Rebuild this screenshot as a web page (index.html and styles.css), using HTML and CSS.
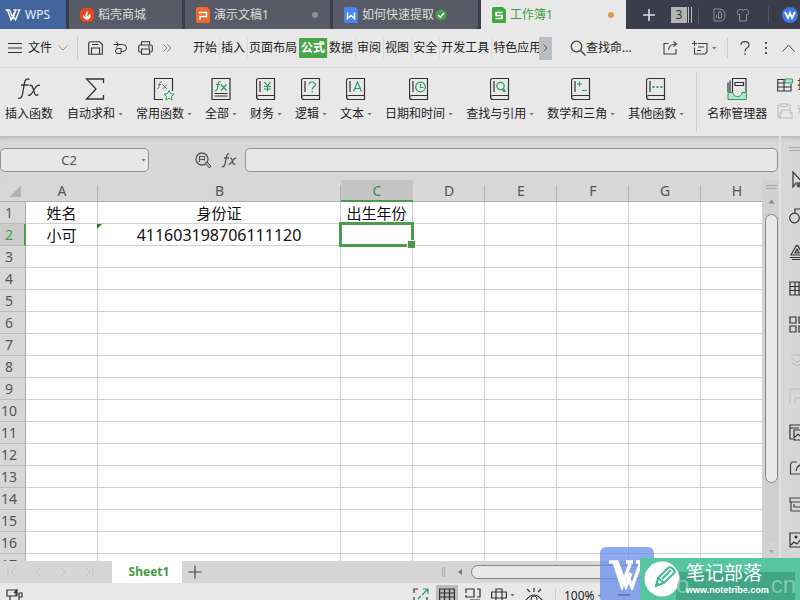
FILE: index.html
```html
<!DOCTYPE html>
<html lang="zh-CN">
<head>
<meta charset="utf-8">
<title>工作簿1 - WPS</title>
<link rel="stylesheet" href="styles.css">
</head>
<body>
<svg class="defs" aria-hidden="true">
  <defs>
    <symbol id="book" viewBox="0 0 20 24">
      <path d="M3 1.500H18.500V22.500H3Q.5 22.500 .5 19.500V3.500Q.5 1.500 3 1.500ZM.5 20Q1 18.500 3 18.500H18.500M4 4V15" fill="none" stroke="#333" stroke-width="1.200"/>
    </symbol>
  </defs>
</svg>

<header class="titlebar">
  <button class="wtab wps"><svg width="16" height="12" viewBox="0 0 16 12"><path d="M.5 1H4.500L8 9.500L11 1H8.500M2.500 1L6 11L9.500 3M15.500 1H12.500M14.500 1L10.500 11L8 5" fill="none" stroke="#fff" stroke-width="1.300"/></svg>WPS</button>
  <button class="wtab shop"><svg width="14" height="14" viewBox="0 0 14 14"><rect width="14" height="14" rx="5" fill="#e8461e"/><path d="M7 2.500Q8.500 5 7 8Q9.500 7.500 9.500 5.500Q12 8.500 9 11Q7 12 5 11Q2 9 3.500 6.500Q4.500 9 5.500 9Q5 6 7 2.500Z" fill="#fff"/></svg>稻壳商城</button>
  <button class="wtab slides"><svg width="14" height="16" viewBox="0 0 14 16"><path d="M0 1.500Q0 0 1.500 0H11L14 3V14.500Q14 16 12.500 16H1.500Q0 16 0 14.500Z" fill="#ea6a35"/><path d="M4 13V9.500H10.500V5.500H3" fill="none" stroke="#fff" stroke-width="1.500"/></svg>演示文稿1<i class="dot"></i></button>
  <button class="wtab doc"><svg width="14" height="16" viewBox="0 0 14 16"><path d="M0 1.500Q0 0 1.500 0H11L14 3V14.500Q14 16 12.500 16H1.500Q0 16 0 14.500Z" fill="#4a86e8"/><path d="M3.500 5.500V11.500L7 8.500L10.500 11.500V5.500" fill="none" stroke="#fff" stroke-width="1.500"/></svg><span>如何快速提取</span><svg width="12" height="12" viewBox="0 0 12 12"><circle cx="6" cy="6" r="5.500" fill="#43a047"/><path d="M3 6L5.300 8.200L9 4" fill="none" stroke="#fff" stroke-width="1.300"/></svg></button>
  <button class="wtab sheet active"><svg width="14" height="16" viewBox="0 0 14 16"><path d="M0 1.500Q0 0 1.500 0H11L14 3V14.500Q14 16 12.500 16H1.500Q0 16 0 14.500Z" fill="#41a845"/><path d="M10.500 5.500H4V8.500H10V11.500H3.500" fill="none" stroke="#fff" stroke-width="1.500"/></svg>工作簿1<i class="dot orange"></i></button>
  <div class="window-tools">
    <button aria-label="新建"><svg width="14" height="14" viewBox="0 0 14 14"><path d="M7 1V13M1 7H13" stroke="#ddd" stroke-width="1.600"/></svg></button>
    <button class="count">3</button>
    <span class="vline"></span>
    <button aria-label="文档"><svg width="13" height="14" viewBox="0 0 13 14"><path d="M1 1H7Q12 2 12 7Q12 13 7 13H1ZM3.500 10V7M5.500 11V5L7 3L8.500 5V10H5.500" fill="none" stroke="#8d9099"/></svg></button>
    <button aria-label="皮肤"><svg width="14" height="14" viewBox="0 0 14 14"><path d="M4 1Q7 4 10 1L13 3.500L12 6.500H10.500V13H3.500V6.500H2L1 3.500Z" fill="none" stroke="#8d9099"/></svg></button>
    <span class="vline far"></span>
    <button class="avatar" aria-label="账号"><svg width="16" height="16" viewBox="0 0 16 16"><circle cx="8" cy="8" r="8" fill="#3f78e0"/><path d="M3 5L6 11L8 6L10 11L13 5" fill="none" stroke="#fff" stroke-width="1.800"/></svg></button>
  </div>
</header>

<nav class="menubar">
  <button class="file"><svg width="14" height="12" viewBox="0 0 14 12"><path d="M0 1.500H14M0 6H14M0 10.500H14" stroke="#333" stroke-width="1.200"/></svg>文件<svg width="10" height="6" viewBox="0 0 10 6"><path d="M.5 .5L5 5L9.500 .5" fill="none" stroke="#999"/></svg></button>
  <div class="quick">
    <button aria-label="保存"><svg width="15" height="14" viewBox="0 0 15 14"><path d="M2.500 .7H11.500L14.300 3.500V13.300H.7V2.500Q.7 .7 2.500 .7ZM3.500 13V7H11.500V13M4 3.500H10.500" fill="none" stroke="#333" stroke-width="1.100"/></svg></button>
    <button aria-label="撤消"><svg width="15" height="14" viewBox="0 0 15 14"><path d="M.5 3.500H9.500Q13.500 3.500 13.500 7T9.500 10.500H8M3 .5L5.500 3.500L3 6.500M8 7V12.500H5Q2.500 12.500 2.500 10T5 7.500H8" fill="none" stroke="#333"/></svg></button>
    <button aria-label="打印"><svg width="15" height="14" viewBox="0 0 15 14"><path d="M3.500 4V.7H11.500V4M3.500 11H2Q.7 11 .7 9.500V5.500Q.7 4 2 4H13Q14.300 4 14.300 5.500V9.500Q14.300 11 13 11H11.500M3.500 8H11.500V13.300H3.500ZM10 6H12" fill="none" stroke="#333" stroke-width="1.100"/></svg></button>
    <button aria-label="更多"><svg width="9" height="8" viewBox="0 0 9 8"><path d="M.5 .5L4 4L.5 7.500M4.500 .5L8 4L4.500 7.500" fill="none" stroke="#888"/></svg></button>
  </div>
  <div class="tabs">
    <button>开始</button><button>插入</button><button>页面布局</button><button class="on">公式</button><button>数据</button><button>审阅</button><button>视图</button><button>安全</button><button>开发工具</button><button>特色应用</button>
  </div>
  <button class="scroll" aria-label="向右滚动"><svg width="5" height="8" viewBox="0 0 5 8"><path d="M.5 .5L4 4L.5 7.500" fill="none" stroke="#666"/></svg></button>
  <button class="find"><svg width="16" height="16" viewBox="0 0 16 16"><circle cx="6.500" cy="6.500" r="5.300" fill="none" stroke="#444" stroke-width="1.300"/><path d="M10.500 10.500L15.500 15.500" stroke="#444" stroke-width="1.500"/></svg>查找命...</button>
  <div class="menu-right">
    <button aria-label="分享"><svg width="15" height="14" viewBox="0 0 15 14"><path d="M5.500 2.500H1V13H13V8M5.500 9Q6 3 13 3M10.500 .5L13.500 3L10.500 5.500" fill="none" stroke="#444" stroke-width="1.100"/></svg></button>
    <button aria-label="批注"><svg width="16" height="14" viewBox="0 0 16 14"><path d="M6 2.500H15V11L13 13H2.500V6.500M0 2.500H5M2.500 0V5M6 6H12M5 9.500H9" fill="none" stroke="#444" stroke-width="1.100"/></svg><i class="caret"></i></button>
    <span class="sep"></span>
    <button aria-label="帮助"><svg width="10" height="14" viewBox="0 0 10 14"><path d="M1 4Q1 .7 5 .7T9 4Q9 6 7 7Q5 8 5 10.500M5 12.300V14" fill="none" stroke="#444" stroke-width="1.200"/></svg></button>
    <button aria-label="选项"><svg width="4" height="14" viewBox="0 0 4 14"><path d="M1 1H3V3H1ZM1 6H3V8H1ZM1 11H3V13H1Z" fill="#555"/></svg></button>
    <button aria-label="折叠"><svg width="13" height="8" viewBox="0 0 13 8"><path d="M.5 7.500L6.500 1L12.500 7.500" fill="none" stroke="#444"/></svg></button>
  </div>
</nav>

<section class="ribbon">
  <button><svg width="26" height="24" viewBox="0 0 26 24"><path d="M13.500 2.500Q9.500 .5 8.500 6L6.500 17Q5.500 22.500 2 21M5 8H12.500M13.500 8.500Q16 7.500 17 11L18.500 16Q19.500 19.500 22.500 17.500M24 8.500Q21.500 7 18.500 12L17 14.500Q14 19.500 12 18" fill="none" stroke="#333" stroke-width="1.300"/></svg><span>插入函数</span></button>
  <button><svg width="20" height="24" viewBox="0 0 20 24"><path d="M18.500 6V2H1.500L11 12L1.500 22H18.500V18" fill="none" stroke="#333" stroke-width="1.300"/></svg><span>自动求和<i class="caret"></i></span></button>
  <button><svg width="22" height="24" viewBox="0 0 22 24"><path d="M10 22.500H1.500V1.500H19.500V14" fill="none" stroke="#333" stroke-width="1.200"/><path d="M9 5Q7 4 6.500 7L6 10Q5.500 12 4 11.500M5 7.500H8M9.500 7.500L14 12M14 7.500L9.500 12" fill="none" stroke="#777"/><path d="M16 13.500L17.600 16.700L21 17.200L18.500 19.500L19.100 23L16 21.300L12.900 23L13.500 19.500L11 17.200L14.400 16.700Z" fill="#e8e8e8" stroke="#2a9d5c"/></svg><span>常用函数<i class="caret"></i></span></button>
  <button><svg width="20" height="24" viewBox="0 0 20 24"><path d="M1 1.500H19V22.500H1ZM3.500 16.500H16.500M3.500 19H16.500" fill="none" stroke="#333" stroke-width="1.200"/><path d="M9.500 5Q7.500 4 7 7L6.500 11Q6 14 4 13.500M5 7.500H9M10 7.500L15.500 13.500M15.500 7.500L10 13.500" fill="none" stroke="#2a9d5c" stroke-width="1.200"/></svg><span>全部<i class="caret"></i></span></button>
  <button><svg width="20" height="24" viewBox="0 0 20 24"><use href="#book"/><path d="M8.500 5L11.500 9L14.500 5M11.500 9V14M8 9.500H15M8 12H15" fill="none" stroke="#2a9d5c" stroke-width="1.200"/></svg><span>财务<i class="caret"></i></span></button>
  <button><svg width="20" height="24" viewBox="0 0 20 24"><use href="#book"/><path d="M8 7.500Q8 5 11 5T14.500 7.500Q14.500 9 12.500 10Q11.300 11 11.300 12.500M11.300 14V15.500" fill="none" stroke="#2a9d5c" stroke-width="1.200"/></svg><span>逻辑<i class="caret"></i></span></button>
  <button><svg width="20" height="24" viewBox="0 0 20 24"><use href="#book"/><path d="M7.500 14.500L11.500 5L15.500 14.500M9 11.500H14" fill="none" stroke="#2a9d5c" stroke-width="1.200"/></svg><span>文本<i class="caret"></i></span></button>
  <button><svg width="20" height="24" viewBox="0 0 20 24"><use href="#book"/><circle cx="11.500" cy="10" r="4.800" fill="none" stroke="#2a9d5c" stroke-width="1.200"/><path d="M11.500 7V10.500H14.500" fill="none" stroke="#2a9d5c" stroke-width="1.200"/></svg><span>日期和时间<i class="caret"></i></span></button>
  <button><svg width="20" height="24" viewBox="0 0 20 24"><use href="#book"/><circle cx="10.500" cy="9" r="3.700" fill="none" stroke="#2a9d5c" stroke-width="1.200"/><path d="M12.500 12.500Q13 11 15 13.500Q16 15 13.500 14.500Z" fill="none" stroke="#2a9d5c" stroke-width="1.200"/></svg><span>查找与引用<i class="caret"></i></span></button>
  <button><svg width="20" height="24" viewBox="0 0 20 24"><use href="#book"/><path d="M8.500 4.500V9.500M6 7H11M11 13.500H16" stroke="#2a9d5c" stroke-width="1.200"/></svg><span>数学和三角<i class="caret"></i></span></button>
  <button><svg width="20" height="24" viewBox="0 0 20 24"><use href="#book"/><path d="M6.500 9H8.500V11H6.500ZM10.500 9H12.500V11H10.500ZM14.500 9H16.500V11H14.500Z" fill="#2a9d5c"/></svg><span>其他函数<i class="caret"></i></span></button>
  <span class="sep"></span>
  <button><svg width="20" height="24" viewBox="0 0 20 24"><path d="M1 15.500H6Q6 19.500 10.500 19.500T15 15.500H19.300V22.500H1Z" fill="#b5e6cf" stroke="#2a9d5c"/><path d="M5.500 15V1.500H19V15M3 15V3.500M1 15V5.500M8 5.500H16.500V8.500H8Z" fill="none" stroke="#333" stroke-width="1.200"/></svg><span>名称管理器</span></button>
  <div class="cut">
    <button><svg width="16" height="14" viewBox="0 0 16 14"><path d="M8 1.500H.7V13H14V6M.7 5H8M.7 9H14M7 1.500V13" fill="none" stroke="#333" stroke-width="1.100"/><path d="M8 1H15.400V5H8Z" fill="#b5e6cf" stroke="#2a9d5c"/></svg>指定</button>
    <button class="dim"><svg width="16" height="16" viewBox="0 0 16 16"><path d="M4 2H1V14H4M10 2H13V6M4 .7H10V3.500H4ZM4.500 11V7H13.500V11M4.500 10H3V15H15V10H13.500" fill="none" stroke="#bbb" stroke-width="1.100"/></svg>粘贴</button>
  </div>
</section>

<div class="workspace">
  <main>
    <div class="formula-bar">
      <label class="name-box"><input value="C2" aria-label="名称框"><i class="caret"></i></label>
      <button class="lookup" aria-label="查找"><svg width="17" height="17" viewBox="0 0 17 17"><circle cx="7" cy="7" r="6" fill="none" stroke="#555" stroke-width="1.300"/><path d="M4.500 10V4.500H9.500V8.500M4.500 7.500H9.500" fill="none" stroke="#555" stroke-width="1.100"/><path d="M10.500 10.500L12 10L16 14L14.500 16L10.500 12Z" fill="#aaa" stroke="#555"/></svg></button>
      <button class="fx" aria-label="插入函数"><svg width="16" height="15" viewBox="0 0 16 15"><path d="M8.500 1.200Q6 0 5.500 4L4 11Q3 14.500 .7 13.500M3 5H8M9 5.300Q10.500 4.500 11.300 7.500L12 10Q12.500 12 14.500 11M15.300 5.300Q13.500 4.500 11.500 8T7.500 11.300" fill="none" stroke="#555" stroke-width="1.300"/></svg></button>
      <input class="formula" aria-label="编辑栏">
    </div>
    <div class="grid-area">
      <div class="grid">
        <table>
          <colgroup><col class="c-head"><col class="c"><col class="c-wide"><col class="c"><col class="c"><col class="c"><col class="c"><col class="c"><col class="c"></colgroup>
          <thead><tr><th class="corner"></th><th>A</th><th>B</th><th class="sel">C</th><th>D</th><th>E</th><th>F</th><th>G</th><th>H</th></tr></thead>
          <tbody>
            <tr><th>1</th><td>姓名</td><td>身份证</td><td>出生年份</td><td></td><td></td><td></td><td></td><td></td></tr>
            <tr><th class="sel">2</th><td>小可</td><td class="num flag">411603198706111120</td><td class="cursor"></td><td></td><td></td><td></td><td></td><td></td></tr>
            <tr><th>3</th><td></td><td></td><td></td><td></td><td></td><td></td><td></td><td></td></tr>
            <tr><th>4</th><td></td><td></td><td></td><td></td><td></td><td></td><td></td><td></td></tr>
            <tr><th>5</th><td></td><td></td><td></td><td></td><td></td><td></td><td></td><td></td></tr>
            <tr><th>6</th><td></td><td></td><td></td><td></td><td></td><td></td><td></td><td></td></tr>
            <tr><th>7</th><td></td><td></td><td></td><td></td><td></td><td></td><td></td><td></td></tr>
            <tr><th>8</th><td></td><td></td><td></td><td></td><td></td><td></td><td></td><td></td></tr>
            <tr><th>9</th><td></td><td></td><td></td><td></td><td></td><td></td><td></td><td></td></tr>
            <tr><th>10</th><td></td><td></td><td></td><td></td><td></td><td></td><td></td><td></td></tr>
            <tr><th>11</th><td></td><td></td><td></td><td></td><td></td><td></td><td></td><td></td></tr>
            <tr><th>12</th><td></td><td></td><td></td><td></td><td></td><td></td><td></td><td></td></tr>
            <tr><th>13</th><td></td><td></td><td></td><td></td><td></td><td></td><td></td><td></td></tr>
            <tr><th>14</th><td></td><td></td><td></td><td></td><td></td><td></td><td></td><td></td></tr>
            <tr><th>15</th><td></td><td></td><td></td><td></td><td></td><td></td><td></td><td></td></tr>
            <tr><th>16</th><td></td><td></td><td></td><td></td><td></td><td></td><td></td><td></td></tr>
            <tr><th>17</th><td></td><td></td><td></td><td></td><td></td><td></td><td></td><td></td></tr>
          </tbody>
        </table>
      </div>
      <div class="vscroll">
        <span class="grip"></span>
        <button class="up" aria-label="向上"></button>
        <div class="track"><div class="thumb"></div></div>
        <button class="down" aria-label="向下"></button>
      </div>
    </div>
    <div class="sheetbar">
      <div class="nav">
        <button aria-label="第一张"><svg width="9" height="10" viewBox="0 0 9 10"><path d="M1 0V10M8 1L4 5L8 9" fill="none" stroke="#c2c2c2"/></svg></button>
        <button aria-label="上一张"><svg width="9" height="10" viewBox="0 0 9 10"><path d="M7 1L3 5L7 9" fill="none" stroke="#c2c2c2"/></svg></button>
        <button aria-label="下一张"><svg width="9" height="10" viewBox="0 0 9 10"><path d="M2 1L6 5L2 9" fill="none" stroke="#c2c2c2"/></svg></button>
        <button aria-label="最后一张"><svg width="9" height="10" viewBox="0 0 9 10"><path d="M1 1L5 5L1 9M8 0V10" fill="none" stroke="#c2c2c2"/></svg></button>
      </div>
      <button class="tab">Sheet1</button>
      <button class="add" aria-label="新建工作表"><svg width="14" height="14" viewBox="0 0 14 14"><path d="M7 .5V13.500M.5 7H13.500" stroke="#444" stroke-width="1.200"/></svg></button>
      <div class="hscroll"><span class="split"></span><button class="left" aria-label="向左"></button><div class="hthumb"></div></div>
    </div>
  </main>
  <aside>
    <span class="grip"></span>
    <button aria-label="选择"><svg width="20" height="20" viewBox="0 0 20 20"><path d="M4 2V17L7 13H14Z" fill="none" stroke="#333" stroke-width="1.200"/><circle cx="10" cy="15" r="2.500" fill="#555"/></svg></button>
    <button aria-label="形状"><svg width="20" height="20" viewBox="0 0 20 20"><circle cx="5.500" cy="12" r="4.800" fill="none" stroke="#333" stroke-width="1.200"/><path d="M6 7V3H18V14H11" fill="none" stroke="#333" stroke-width="1.200"/></svg></button>
    <button aria-label="样式"><svg width="20" height="20" viewBox="0 0 20 20"><path d="M2 13L7 4Q8 3 9 4L14 13ZM6 11L8 7L10 11ZM1 15.500H18M3 17.500H18" fill="none" stroke="#333" stroke-width="1.200"/></svg></button>
    <button aria-label="表格"><svg width="20" height="20" viewBox="0 0 20 20"><path d="M1 4H18V17H1ZM1 8.500H18M1 12.500H18M6 4V17M10 4V17" fill="none" stroke="#333" stroke-width="1.200"/></svg></button>
    <button aria-label="模板"><svg width="20" height="20" viewBox="0 0 20 20"><path d="M1 3H7V9H1ZM10 3H16V9H10ZM1 12H7V18H1ZM10 12H16V18H10Z" fill="none" stroke="#333" stroke-width="1.200"/></svg></button>
    <button class="dim" aria-label="图层"><svg width="20" height="20" viewBox="0 0 20 20"><path d="M2 5H17M3 9L8 12L14 9M3 13L8 16L14 13" fill="none" stroke="#333"/></svg></button>
    <button class="dim" aria-label="裁剪"><svg width="20" height="20" viewBox="0 0 20 20"><path d="M1 17V3H15M6 17V12H15" fill="none" stroke="#333"/></svg></button>
    <button aria-label="图库"><svg width="20" height="20" viewBox="0 0 20 20"><path d="M4 17H1V3H12V6M1 6H10M5 8H18V18H5ZM6 15L9 12L13 16" fill="none" stroke="#333" stroke-width="1.200"/></svg></button>
    <button aria-label="分享"><svg width="20" height="20" viewBox="0 0 20 20"><path d="M8 4H3L1.500 6V16H16V12M7 13Q8 6 16 6" fill="none" stroke="#444" stroke-width="1.200"/></svg></button>
    <button aria-label="归档"><svg width="20" height="20" viewBox="0 0 20 20"><path d="M1 4H18V8H1ZM2 8V17H18M5 10V13H12" fill="none" stroke="#444" stroke-width="1.200"/></svg></button>
    <button aria-label="图片"><svg width="20" height="20" viewBox="0 0 20 20"><path d="M1 3H18V17H1ZM2 15L5 12L8 14L12 9L16 14" fill="none" stroke="#333" stroke-width="1.200"/><circle cx="7" cy="7" r="1.500" fill="#333"/></svg></button>
  </aside>
</div>

<footer class="statusbar">
  <button class="macro" aria-label="录制"><svg width="17" height="15" viewBox="0 0 17 15"><path d="M1 2H10V8H1ZM8 5L11 2V8M4 8V13H9M13 14V5H16V9H13" fill="none" stroke="#333" stroke-width="1.200"/></svg></button>
  <div class="views">
    <button aria-label="全屏"><svg width="16" height="14" viewBox="0 0 16 14"><path d="M5 1H1V5M1 9V13H5M11 13H14V9" fill="none" stroke="#333" stroke-width="1.200"/><path d="M10 1H15V6M15 1L9 7M8 8L5 11" fill="none" stroke="#2a9d5c" stroke-width="1.200"/></svg></button>
    <button class="on" aria-label="普通视图"><svg width="16" height="14" viewBox="0 0 16 14"><path d="M.6 1H15.400V13H.6ZM.6 5H15.400M.6 9H15.400M5.500 1V13M10.500 1V13" fill="none" stroke="#333" stroke-width="1.200"/></svg></button>
    <button aria-label="分页预览"><svg width="16" height="14" viewBox="0 0 16 14"><path d="M1 5V1H9V9H1V7M12 1H15V9H12M5 12H15" fill="none" stroke="#333" stroke-width="1.200"/></svg></button>
    <button aria-label="阅读模式"><svg width="16" height="14" viewBox="0 0 16 14"><path d="M.6 4H15.400V10H.6ZM5 4V1H11V13H5Z" fill="none" stroke="#333" stroke-width="1.200"/></svg><i class="caret"></i></button>
    <button aria-label="护眼模式"><svg width="18" height="14" viewBox="0 0 18 14"><path d="M1 12Q9 2 17 12M9 0V4M2 1L5 4M16 1L13 4" fill="none" stroke="#333" stroke-width="1.200"/><circle cx="9" cy="11" r="3" fill="none" stroke="#333"/></svg></button>
    <span class="sep"></span>
    <button class="zoom">100%<i class="caret"></i></button>
    <button class="minus" aria-label="缩小"></button>
  </div>
</footer>

<div class="badge">
  <div class="blue"><svg width="34" height="30" viewBox="0 0 34 30"><path d="M0 2H8L17 26L22 13M5 2L13 26L21 4M17 2H24M34 2H27M32 2L23 27L17 12" fill="none" stroke="#fff" stroke-width="3.500"/></svg></div>
  <div class="banner">
    <svg width="36" height="36" viewBox="0 0 36 36"><circle cx="18" cy="18" r="17.500" fill="#fff"/><path d="M12 25L14 17L24 7Q26 5 29 8T30 12L20 22ZM14 17L20 22M18 18L27 9" fill="none" stroke="#3dbb8d" stroke-width="2"/><path d="M11 26L16 24L13 20Z" fill="#3dbb8d"/></svg>
    <div class="words"><strong>笔记部落</strong><small>www.notetribe.com</small></div>
    <span class="ghost">o</span><span class="ghost end">.cn</span>
  </div>
</div>
</body>
</html>
```
FILE: styles.css
```css
* { box-sizing: border-box; }
body {
  margin: 0;
  height: 100vh;
  display: flex;
  flex-direction: column;
  overflow: hidden;
  position: relative;
  background: #e8e8e8;
  color: #222;
  font: 12px/16px "Noto Sans", "Noto Sans CJK SC", sans-serif;
}
button {
  margin: 0;
  padding: 0;
  border: 0;
  background: none;
  color: inherit;
  font: inherit;
  white-space: nowrap;
  display: flex;
  align-items: center;
  flex: none;
}
svg { flex: none; display: block; }
.defs { position: absolute; width: 0; height: 0; }
.caret {
  flex: none;
  width: 5px;
  height: 3px;
  background: #777;
  clip-path: polygon(0 0, 100% 0, 50% 100%);
}
.sep { width: 1px; background: #cfcfcf; flex: none; }

/* window tabs */
.titlebar {
  height: 29px;
  flex: none;
  display: flex;
  gap: 3px;
  background: #3b3d4a;
  overflow: hidden;
}
.wtab {
  height: 29px;
  padding: 0 12px 0 11px;
  gap: 4px;
  background: #585a66;
  color: #ddd;
}
.wps { width: 66px; padding: 0 5px; background: #43659e; color: #e8eefa; }
.shop { width: 113px; }
.slides { width: 145px; }
.doc { width: 145px; border-radius: 0 0 4px 0; }
.doc span { margin-right: -3px; }
.sheet { width: 145px; }
.wtab.active { background: #e8e8e8; color: #3c9f40; }
.dot { width: 6px; height: 6px; border-radius: 3px; background: #8b8d97; margin-left: auto; }
.orange { background: #e69a4b; }
.window-tools { flex: 1; display: flex; align-items: center; padding-left: 13px; gap: 10px; }
.count {
  width: 21px;
  height: 16px;
  margin-left: 5px;
  justify-content: center;
  background: linear-gradient(90deg, #b4b4b4 16px, #3b3d4a 16px 17px, #bbb 17px 18px, #3b3d4a 18px 20px, #bbb 20px);
  color: #333;
  padding-right: 5px;
}
.vline { width: 1px; height: 16px; background: #555763; margin-right: 4px; margin-left: -4px; }
.vline.far { margin-left: 8px; margin-right: 3px; }

/* menu */
.menubar {
  height: 39px;
  flex: none;
  display: flex;
  align-items: center;
  border-bottom: 1px solid #dadada;
  padding-left: 8px;
}
.file { gap: 6px; padding-right: 9px; border-right: 1px solid #ccc; height: 24px; }
.quick { display: flex; gap: 10px; padding-left: 10px; width: 113px; align-items: center; }
.tabs { display: flex; width: 348px; overflow: hidden; flex: none; }
.tabs button { padding: 0 2px; height: 20px; }
.tabs button + button { box-shadow: inset 1px 0 #dadada; }
.tabs .on { background: #4aa54a; color: #fff; font-weight: 700; box-shadow: none; }
.scroll { width: 13px; height: 23px; background: #b9bec2; justify-content: center; }
.find { margin-left: 18px; }
.menu-right { display: flex; align-items: center; gap: 14px; margin-left: 31px; }
.menu-right button { gap: 4px; }
.menu-right .sep { height: 20px; margin: 0 -2px 0 -4px; }

/* ribbon */
.ribbon {
  height: 68px;
  flex: none;
  display: flex;
  gap: 13px;
  padding: 9px 0 0 5px;
  overflow: hidden;
}
.ribbon > button { flex-direction: column; align-self: flex-start; gap: 5px; }
.ribbon > button:first-child { margin-right: 1px; }
.ribbon > button span { display: flex; align-items: center; gap: 3px; }
.ribbon > .sep { height: 60px; margin: -5px -3px 0 -1px; }
.cut { display: flex; flex-direction: column; gap: 10px; margin-left: -3px; }
.cut button { gap: 4px; }
.cut .dim { color: #bbb; }

/* work area */
.workspace { flex: 1; min-height: 0; display: flex; background: #d7d7d7; box-shadow: inset 0 4px 4px -3px #aaa; }
main { flex: 1; min-width: 0; display: flex; flex-direction: column; }
.formula-bar { height: 44px; flex: none; display: flex; align-items: center; padding: 4px 1px 0 0; }
.name-box {
  display: flex;
  align-items: center;
  width: 149px;
  height: 24px;
  border: 1px solid #929292;
  border-radius: 5px;
  background: #e7e7e7;
  padding-right: 2px;
}
.name-box input {
  flex: 1;
  min-width: 0;
  border: 0;
  padding: 0 4px 0 0;
  background: none;
  text-align: center;
  font: 13px/20px "Noto Sans", sans-serif;
  color: #555;
}
.lookup { margin-left: 46px; }
.fx { margin: 0 8px 0 9px; }
.formula {
  flex: 1;
  min-width: 0;
  height: 24px;
  border: 1px solid #929292;
  border-radius: 5px;
  background: #e7e7e7;
}

/* grid */
.grid-area { flex: 1; min-height: 0; display: flex; }
.grid { flex: 1; min-width: 0; overflow: hidden; background: #fff; }
table { table-layout: fixed; width: 773px; border-collapse: separate; border-spacing: 0; }
.c-head { width: 26px; }
.c { width: 72px; }
.c-wide { width: 243px; }
tr { height: 22px; }
th, td {
  height: 22px;
  padding: 0;
  text-align: center;
  line-height: 20px;
  border-right: 1px solid #d0d0d0;
  border-bottom: 1px solid #d0d0d0;
  white-space: nowrap;
}
td { position: relative; font-size: 15px; color: #111; }
td.num { font-size: 16px; }
th { font-size: 14px; font-weight: 400; color: #555; background: #d7d7d7; border-bottom-color: #b0b0b0; }
thead th {
  border-right: 0;
  background: linear-gradient(#b4b4b4, #b4b4b4) right bottom / 1px 16px no-repeat #d7d7d7;
}
tbody th { padding-right: 7px; border-right-color: #a8a8a8; border-bottom-color: #bdbdbd; }
thead th.sel { background: #c5c5c5; color: #4a8a4a; box-shadow: inset 0 -1px #4a9c4a; border-bottom-color: #4a9c4a; }
tbody th.sel { background: #cbcbcb; color: #4a9c4a; border-right: 2px solid #4a9c4a; padding-right: 6px; }
th.corner {
  background: linear-gradient(135deg, transparent 50%, #b2b2b2 50%) 10px 6px / 11px 11px no-repeat #d7d7d7;
}
.flag::before {
  content: "";
  position: absolute;
  left: -1px;
  top: 0;
  border-top: 5px solid #2e7d32;
  border-right: 5px solid transparent;
}
.cursor::before { content: ""; position: absolute; inset: -2px; border: 3px solid #4a9c4a; z-index: 1; }
.cursor::after {
  content: "";
  position: absolute;
  right: -4px;
  bottom: -4px;
  width: 7px;
  height: 7px;
  background: #4a9c4a;
  border: 1px solid #fff;
  z-index: 2;
}
.vscroll {
  width: 17px;
  flex: none;
  display: flex;
  flex-direction: column;
  padding: 5px 1px 0 3px;
  background: #d2d2d2;
}
.grip { height: 4px; flex: none; border: solid #aaa; border-width: 1px 0; margin: 0 1px; }
.up, .down { height: 25px; }
.up::before, .down::before {
  content: "";
  margin: auto;
  width: 6px;
  height: 4px;
  background: #888;
  clip-path: polygon(50% 0, 100% 100%, 0 100%);
}
.down { height: 19px; }
.down::before { background: #aaa; clip-path: polygon(0 0, 100% 0, 50% 100%); }
.track { flex: 1; background: #cfcfcf; }
.thumb { height: 82%; border: 1px solid #8a8a8a; border-radius: 7px; background: #e8e8e8; }

.sheetbar { height: 22px; flex: none; display: flex; align-items: center; background: #d6d6d6; }
.nav { width: 112px; display: flex; gap: 17px; padding-left: 7px; }
.tab { width: 70px; height: 22px; justify-content: center; background: #fff; color: #3f9b42; font-weight: 700; padding-left: 4px; }
.add { margin-left: 6px; }
.hscroll { margin-left: auto; width: 337px; display: flex; align-items: center; height: 22px; }
.split { width: 3px; height: 10px; border: solid #aaa; border-width: 0 1px; }
.left { width: 26px; }
.left::before { content: ""; margin-left: 13px; width: 4px; height: 6px; background: #777; clip-path: polygon(0 50%, 100% 0, 100% 100%); }
.hthumb { flex: 1; height: 14px; border: 1px solid #8a8a8a; border-radius: 7px; background: #e8e8e8; }

/* side tools */
aside {
  width: 21px;
  flex: none;
  border-left: 2px solid #e2e2e2;
  overflow: hidden;
  padding: 11px 0 0 8px;
  display: flex;
  flex-direction: column;
  gap: 16px;
}
aside .grip { margin: 0 0 3px; }
aside .dim { opacity: .15; }

.statusbar { height: 17px; flex: none; display: flex; align-items: flex-start; overflow: hidden; padding-top: 5px; }
.macro { margin-left: 6px; }
.views { margin-left: auto; width: 387px; display: flex; align-items: flex-start; gap: 10px; }
.views .on { background: #bcbcbc; padding: 3px; margin: -3px -3px 0; }
.views button { gap: 3px; }
.views .sep { height: 16px; margin: 0 0 0 2px; }
.views .sep + .zoom { margin-left: -2px; }
.minus { width: 12px; height: 2px; background: #444; margin: 6px 0 0 5px; }

/* floating badge */
.badge { position: absolute; right: 0; bottom: 0; width: 200px; height: 53px; overflow: hidden; }
.blue {
  position: absolute;
  left: 0;
  top: 0;
  width: 54px;
  height: 56px;
  border-radius: 6px;
  background: rgba(103, 141, 235, .75);
  padding: 13px 0 0 9px;
}
.banner {
  position: absolute;
  left: 40px;
  right: 0;
  bottom: 0;
  height: 42px;
  display: flex;
  align-items: center;
  padding: 0 4px;
  background: linear-gradient(#42a686, #42a686) 36px 14px / 119px 28px no-repeat #56c5a0;
}
.words { display: flex; flex-direction: column; padding: 0 0 0 6px; color: #fff; position: relative; z-index: 1; }
.words strong { font-size: 19px; line-height: 22px; font-weight: 400; }
.words small { font: 700 9px/12px "Liberation Sans", sans-serif; }
.ghost { position: absolute; left: 36px; bottom: 0; font: 24px/30px "Liberation Sans", sans-serif; color: #7fcbb0; }
.ghost.end { left: auto; right: 4px; }
```
